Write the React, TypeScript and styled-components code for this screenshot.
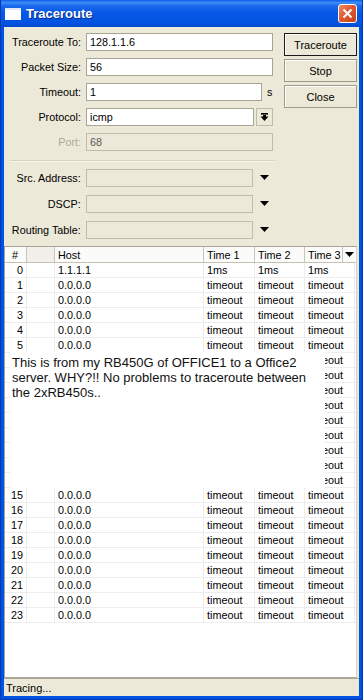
import styled, { createGlobalStyle } from 'styled-components';

const GlobalStyle = createGlobalStyle`
  html, body {
    margin: 0;
    padding: 0;
  }
  body {
    width: 363px;
    height: 700px;
    overflow: hidden;
    font-family: "Liberation Sans", Arial, sans-serif;
  }
`;

interface Row {
  num: number;
  host: string;
  t1: string;
  t2: string;
  t3: string;
  covered?: boolean;
}

// rows 6..14 sit under the pasted note, only the tail of "timeout" peeks out
const rows: Row[] = Array.from({ length: 24 }, (_, i) =>
  i === 0
    ? { num: 0, host: '1.1.1.1', t1: '1ms', t2: '1ms', t3: '1ms' }
    : i >= 6 && i <= 14
    ? { num: i, host: '', t1: '', t2: '', t3: 'eout', covered: true }
    : { num: i, host: '0.0.0.0', t1: 'timeout', t2: 'timeout', t3: 'timeout' }
);

const Frame = styled.div`
  display: flex;
  flex-direction: column;
  width: 363px;
  height: 700px;
  box-sizing: border-box;
  background: #0052e0;
  border-left: 1px solid #0038b8;
  border-right: 1px solid #0038b8;
  border-bottom: 1px solid #0038b8;
`;
const TitleBar = styled.div`
  display: flex;
  align-items: center;
  height: 27px;
  flex-shrink: 0;
  padding: 0 5px 0 4px;
  background: linear-gradient(
    to bottom,
    #0a5ee8 0%,
    #3d8ef9 10%,
    #1a68ec 22%,
    #0657e6 50%,
    #0454e2 85%,
    #0348cf 100%
  );
`;
const Title = styled.span`
  margin-left: 5px;
  font: bold 13px "Liberation Sans", Arial, sans-serif;
  color: #fff;
  text-shadow: 1px 1px 0 #0a2a8a;
`;
const CloseBtn = styled.div`
  display: flex;
  justify-content: center;
  align-items: center;
  width: 19px;
  height: 19px;
  margin-left: auto;
  box-sizing: border-box;
  border: 1px solid #fff;
  border-radius: 3px;
  background: linear-gradient(135deg, #f08a64 0%, #e05a32 45%, #c8401c 100%);
`;
const Client = styled.div`
  display: flex;
  flex-direction: column;
  flex: 1;
  min-height: 0;
  margin: 0 3px 3px 3px;
  background: #ece9d8;
  font-size: 10.8px;
  color: #000;
`;
const Top = styled.div`
  display: flex;
  padding-top: 6px;
`;
const Fields = styled.div`
  display: flex;
  flex-direction: column;
  width: 270px;
`;
const FieldGroup = styled.div<{ gap: number }>`
  display: flex;
  flex-direction: column;
  gap: ${(p) => p.gap}px;
`;
const FieldRow = styled.div`
  display: flex;
  align-items: center;
  height: 18px;
`;
const Label = styled.span<{ disabled?: boolean }>`
  width: 77px;
  margin-right: 5px;
  text-align: right;
  white-space: nowrap;
  color: ${(p) => (p.disabled ? '#aca899' : '#000')};
`;
const Input = styled.div<{ width: number; disabled?: boolean }>`
  display: flex;
  align-items: center;
  width: ${(p) => p.width}px;
  height: 18px;
  box-sizing: border-box;
  padding-left: 3px;
  border: 1px solid ${(p) => (p.disabled ? '#c0bca8' : '#a9a595')};
  background: ${(p) => (p.disabled ? '#ece9d8' : '#fff')};
  color: ${(p) => (p.disabled ? '#5a5a5a' : '#000')};
`;
const Unit = styled.span`
  margin-left: 5px;
`;
const DropBtn = styled.div`
  display: flex;
  justify-content: center;
  align-items: center;
  width: 17px;
  height: 18px;
  margin-left: 2px;
  box-sizing: border-box;
  border: 1px solid #c0bca8;
  background: #ece9d8;
`;
const ArrowSlot = styled.div`
  display: flex;
  justify-content: center;
  width: 20px;
  margin-left: 1px;
`;
const Separator = styled.div`
  height: 0;
  margin: 9px 0 7px 6px;
  border-top: 1px solid #d6d2c2;
  border-bottom: 1px solid #f6f5ee;
`;
const Buttons = styled.div`
  display: flex;
  flex-direction: column;
  gap: 3px;
  margin-left: 10px;
`;
const Button = styled.div<{ primary?: boolean }>`
  display: flex;
  justify-content: center;
  align-items: center;
  width: 73px;
  height: 23px;
  box-sizing: border-box;
  border: 1px solid ${(p) => (p.primary ? '#1a1a1a' : '#9d9a8a')};
  background: #ece9d8;
  box-shadow: inset 1px 1px 0 #fff;
  font-size: 11px;
`;
const Table = styled.div`
  position: relative;
  display: flex;
  flex-direction: column;
  flex: 1;
  min-height: 0;
  margin: 7px 2px 0 0;
  border: 1px solid #a9a595;
  border-right-color: #d8d5c6;
  background: #fff;
  overflow: hidden;
`;
const HeadRow = styled.div`
  display: grid;
  grid-template-columns: 22px 28px 149px 51px 50px 38px 1fr;
  height: 16px;
  box-sizing: border-box;
  border-bottom: 1px solid #c5c2b2;
  background: #fbfbf9;
`;
const HeadCell = styled.div<{ center?: boolean; shade?: boolean; pad?: number }>`
  display: flex;
  align-items: center;
  justify-content: ${(p) => (p.center ? 'center' : 'flex-start')};
  padding-left: ${(p) => (p.center ? 0 : p.pad ?? 3)}px;
  border-right: 1px solid #c9c6b7;
  background: ${(p) => (p.shade ? '#f1f0ea' : 'transparent')};
  white-space: nowrap;
  overflow: hidden;
  &:last-child {
    border-right: none;
  }
`;
const BodyRow = styled.div`
  display: grid;
  grid-template-columns: 22px 28px 149px 51px 50px 50px 1fr;
  height: 15px;
  box-sizing: border-box;
  border-bottom: 1px solid #ededed;
`;
const Cell = styled.div<{ right?: boolean; pad?: number }>`
  display: flex;
  align-items: center;
  justify-content: ${(p) => (p.right ? 'flex-end' : 'flex-start')};
  padding-left: ${(p) => (p.right ? 0 : p.pad ?? 3)}px;
  padding-right: ${(p) => (p.right ? 3 : 0)}px;
  border-right: 1px solid #ececec;
  white-space: nowrap;
  overflow: hidden;
  &:last-child {
    border-right: none;
  }
`;
const Note = styled.div`
  position: absolute;
  left: 5px;
  top: 105px;
  width: 315px;
  height: 136px;
  box-sizing: border-box;
  padding: 3px 0 0 2px;
  background: #fff;
  font-size: 13px;
  line-height: 15px;
  color: #111;
`;
const StatusBar = styled.div`
  display: flex;
  align-items: center;
  height: 17px;
  flex-shrink: 0;
  padding-left: 2px;
  border-top: 1px solid #aca899;
  font-size: 11px;
`;

function DownTriangle() {
  return (
    <svg width="9" height="6" viewBox="0 0 9 6">
      <polygon points="0,0 9,0 4.5,5" fill="#000" />
    </svg>
  );
}

function App() {
  return (
    <>
      <GlobalStyle />
      <Frame>
        <TitleBar>
          <svg width="16" height="12" viewBox="0 0 16 12">
            <rect x="0" y="0" width="16" height="12" fill="#fff" />
            <rect x="0" y="0" width="16" height="2" fill="#dfe8f8" />
          </svg>
          <Title>Traceroute</Title>
          <CloseBtn>
            <svg width="11" height="11" viewBox="0 0 11 11">
              <path d="M1.5 1.5 L9.5 9.5 M9.5 1.5 L1.5 9.5" stroke="#fff" strokeWidth="2" />
            </svg>
          </CloseBtn>
        </TitleBar>
        <Client>
          <Top>
            <Fields>
              <FieldGroup gap={7}>
                <FieldRow>
                  <Label>Traceroute To:</Label>
                  <Input width={187}>128.1.1.6</Input>
                </FieldRow>
                <FieldRow>
                  <Label>Packet Size:</Label>
                  <Input width={187}>56</Input>
                </FieldRow>
                <FieldRow>
                  <Label>Timeout:</Label>
                  <Input width={176}>1</Input>
                  <Unit>s</Unit>
                </FieldRow>
                <FieldRow>
                  <Label>Protocol:</Label>
                  <Input width={168}>icmp</Input>
                  <DropBtn>
                    <svg width="9" height="9" viewBox="0 0 9 9">
                      <rect x="1" y="0" width="7" height="1.6" fill="#000" />
                      <polygon points="0.5,3.5 8.5,3.5 4.5,8" fill="#000" />
                      <rect x="3" y="2" width="3" height="2" fill="#000" />
                    </svg>
                  </DropBtn>
                </FieldRow>
                <FieldRow>
                  <Label disabled>Port:</Label>
                  <Input width={187} disabled>
                    68
                  </Input>
                </FieldRow>
              </FieldGroup>
              <Separator />
              <FieldGroup gap={8}>
                <FieldRow>
                  <Label>Src. Address:</Label>
                  <Input width={168} disabled />
                  <ArrowSlot>
                    <DownTriangle />
                  </ArrowSlot>
                </FieldRow>
                <FieldRow>
                  <Label>DSCP:</Label>
                  <Input width={168} disabled />
                  <ArrowSlot>
                    <DownTriangle />
                  </ArrowSlot>
                </FieldRow>
                <FieldRow>
                  <Label>Routing Table:</Label>
                  <Input width={168} disabled />
                  <ArrowSlot>
                    <DownTriangle />
                  </ArrowSlot>
                </FieldRow>
              </FieldGroup>
            </Fields>
            <Buttons>
              <Button primary>Traceroute</Button>
              <Button>Stop</Button>
              <Button>Close</Button>
            </Buttons>
          </Top>
          <Table>
            <HeadRow>
              <HeadCell pad={7}>#</HeadCell>
              <HeadCell shade />
              <HeadCell>Host</HeadCell>
              <HeadCell>Time 1</HeadCell>
              <HeadCell>Time 2</HeadCell>
              <HeadCell>Time 3</HeadCell>
              <HeadCell center>
                <DownTriangle />
              </HeadCell>
            </HeadRow>
            {rows.map((r) => (
              <BodyRow key={r.num}>
                <Cell right>{r.covered ? '' : r.num}</Cell>
                <Cell />
                <Cell>{r.host}</Cell>
                <Cell>{r.t1}</Cell>
                <Cell>{r.t2}</Cell>
                <Cell pad={r.covered ? 17 : 3}>{r.t3}</Cell>
                <Cell />
              </BodyRow>
            ))}
            <Note>
              This is from my RB450G of OFFICE1 to a Office2 server. WHY?!! No problems to traceroute
              between the 2xRB450s..
            </Note>
          </Table>
          <StatusBar>Tracing...</StatusBar>
        </Client>
      </Frame>
    </>
  );
}

export default App;
